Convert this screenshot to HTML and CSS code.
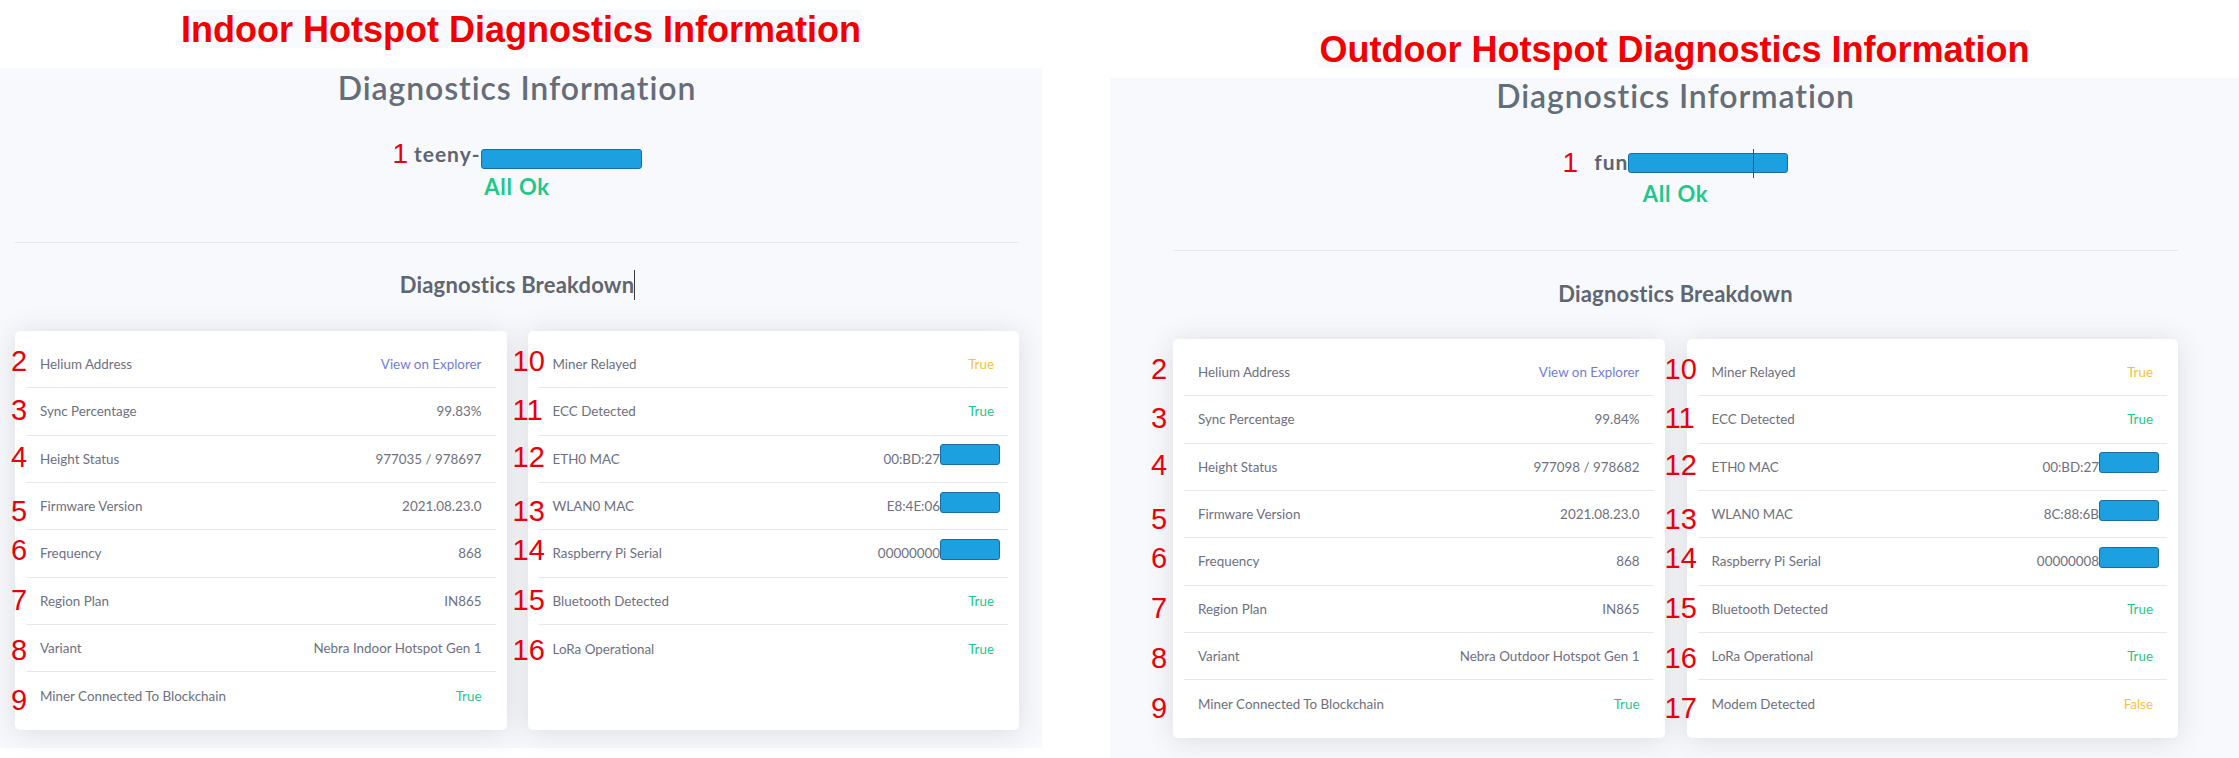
FILE: index.html
```html
<!DOCTYPE html>
<html lang="en">
<head>
<meta charset="utf-8">
<title>Hotspot Diagnostics Information</title>
<link rel="stylesheet" href="styles.css">
</head>
<body>
<div class="page">

  <section class="shot indoor">
    <div class="shot-head"><h1 class="shot-title">Indoor Hotspot Diagnostics Information</h1></div>
    <div class="panel">
      <h2 class="diag-title">Diagnostics Information</h2>
      <div class="host"><span class="anno-host">1</span><span class="host-name">teeny-</span><span class="redact redact-host"></span></div>
      <div class="status">All Ok</div>
      <hr class="divider">
      <h3 class="breakdown"><span class="breakdown-text">Diagnostics Breakdown<span class="caret"></span></span></h3>
      <div class="cards">
        <div class="card card-a">
          <ul class="list">
            <li class="row"><span class="anno">2</span><span class="label">Helium Address</span><span class="value link">View on Explorer</span></li>
            <li class="row"><span class="anno">3</span><span class="label">Sync Percentage</span><span class="value">99.83%</span></li>
            <li class="row"><span class="anno">4</span><span class="label">Height Status</span><span class="value">977035 / 978697</span></li>
            <li class="row"><span class="anno">5</span><span class="label">Firmware Version</span><span class="value">2021.08.23.0</span></li>
            <li class="row"><span class="anno">6</span><span class="label">Frequency</span><span class="value">868</span></li>
            <li class="row"><span class="anno">7</span><span class="label">Region Plan</span><span class="value">IN865</span></li>
            <li class="row"><span class="anno">8</span><span class="label">Variant</span><span class="value">Nebra Indoor Hotspot Gen 1</span></li>
            <li class="row"><span class="anno">9</span><span class="label">Miner Connected To Blockchain</span><span class="value ok">True</span></li>
          </ul>
        </div>
        <div class="card card-b">
          <ul class="list">
            <li class="row"><span class="anno">10</span><span class="label">Miner Relayed</span><span class="value warn">True</span></li>
            <li class="row"><span class="anno">11</span><span class="label">ECC Detected</span><span class="value ok">True</span></li>
            <li class="row"><span class="anno">12</span><span class="label">ETH0 MAC</span><span class="value">00:BD:27<span class="redact redact-row"></span></span></li>
            <li class="row"><span class="anno">13</span><span class="label">WLAN0 MAC</span><span class="value">E8:4E:06<span class="redact redact-row"></span></span></li>
            <li class="row"><span class="anno">14</span><span class="label">Raspberry Pi Serial</span><span class="value">00000000<span class="redact redact-row"></span></span></li>
            <li class="row"><span class="anno">15</span><span class="label">Bluetooth Detected</span><span class="value ok">True</span></li>
            <li class="row"><span class="anno">16</span><span class="label">LoRa Operational</span><span class="value ok">True</span></li>
          </ul>
        </div>
      </div>
    </div>
  </section>

  <section class="shot outdoor">
    <div class="shot-head"><h1 class="shot-title">Outdoor Hotspot Diagnostics Information</h1></div>
    <div class="panel">
      <h2 class="diag-title">Diagnostics Information</h2>
      <div class="host"><span class="anno-host">1</span><span class="host-name">fun</span><span class="redact redact-host"><span class="cursor"></span></span></div>
      <div class="status">All Ok</div>
      <hr class="divider">
      <h3 class="breakdown"><span class="breakdown-text">Diagnostics Breakdown</span></h3>
      <div class="cards">
        <div class="card card-a">
          <ul class="list">
            <li class="row"><span class="anno">2</span><span class="label">Helium Address</span><span class="value link">View on Explorer</span></li>
            <li class="row"><span class="anno">3</span><span class="label">Sync Percentage</span><span class="value">99.84%</span></li>
            <li class="row"><span class="anno">4</span><span class="label">Height Status</span><span class="value">977098 / 978682</span></li>
            <li class="row"><span class="anno">5</span><span class="label">Firmware Version</span><span class="value">2021.08.23.0</span></li>
            <li class="row"><span class="anno">6</span><span class="label">Frequency</span><span class="value">868</span></li>
            <li class="row"><span class="anno">7</span><span class="label">Region Plan</span><span class="value">IN865</span></li>
            <li class="row"><span class="anno">8</span><span class="label">Variant</span><span class="value">Nebra Outdoor Hotspot Gen 1</span></li>
            <li class="row"><span class="anno">9</span><span class="label">Miner Connected To Blockchain</span><span class="value ok">True</span></li>
          </ul>
        </div>
        <div class="card card-b">
          <ul class="list">
            <li class="row"><span class="anno">10</span><span class="label">Miner Relayed</span><span class="value warn">True</span></li>
            <li class="row"><span class="anno">11</span><span class="label">ECC Detected</span><span class="value ok">True</span></li>
            <li class="row"><span class="anno">12</span><span class="label">ETH0 MAC</span><span class="value">00:BD:27<span class="redact redact-row"></span></span></li>
            <li class="row"><span class="anno">13</span><span class="label">WLAN0 MAC</span><span class="value">8C:88:6B<span class="redact redact-row"></span></span></li>
            <li class="row"><span class="anno">14</span><span class="label">Raspberry Pi Serial</span><span class="value">00000008<span class="redact redact-row"></span></span></li>
            <li class="row"><span class="anno">15</span><span class="label">Bluetooth Detected</span><span class="value ok">True</span></li>
            <li class="row"><span class="anno">16</span><span class="label">LoRa Operational</span><span class="value ok">True</span></li>
            <li class="row"><span class="anno">17</span><span class="label">Modem Detected</span><span class="value warn">False</span></li>
          </ul>
        </div>
      </div>
    </div>
  </section>

</div>
</body>
</html>
```

FILE: styles.css
```css
* {
  box-sizing: border-box;
  margin: 0;
  padding: 0;
}

html,
body {
  background: #ffffff;
}

body {
  width: 2239px;
  height: 758px;
  overflow: hidden;
  font-family: Lato, "Open Sans", sans-serif;
}

.page {
  display: grid;
  grid-template-columns: 1042px 1129px;
  column-gap: 68px;
  align-items: start;
}

.shot {
  display: flex;
  flex-direction: column;
}

.shot-head {
  display: flex;
  justify-content: center;
}

.indoor .shot-head {
  height: 68px;
  padding-top: 10px;
}

.outdoor .shot-head {
  height: 78px;
  padding-top: 30px;
}

.shot-title {
  font-family: "Liberation Sans", Arial, sans-serif;
  font-weight: 700;
  font-size: 36px;
  line-height: 37px;
  height: 38px;
  padding: 1px 1px 0;
  color: #f20000;
  background: #f9fafd;
  white-space: nowrap;
}

.panel {
  height: 680px;
  background: #f8f9fc;
  display: flex;
  flex-direction: column;
}

.indoor .panel {
  padding: 2px 23px 0 15px;
}

.outdoor .panel {
  padding: 0 61px 0 63px;
}

.diag-title {
  font-weight: 600;
  font-size: 32px;
  letter-spacing: 0.9px;
  line-height: 36px;
  color: #656d79;
  text-align: center;
}

.host {
  display: flex;
  justify-content: center;
  align-items: flex-start;
  height: 30px;
}

.indoor .host {
  margin-top: 38px;
}

.outdoor .host {
  margin-top: 34px;
}

.anno-host {
  font-family: "Liberation Sans", Arial, sans-serif;
  font-size: 28px;
  line-height: 20px;
  color: #e8000a;
}

.indoor .anno-host {
  margin-right: 6px;
}

.outdoor .anno-host {
  margin-top: 5px;
  margin-right: 16px;
}

.host-name {
  font-weight: 700;
  font-size: 21px;
  letter-spacing: 1px;
  line-height: 20px;
  color: #5e6470;
}

.outdoor .host-name {
  margin-top: 4px;
}

.redact {
  display: inline-block;
  background: #1da0e0;
  border: 1px solid #1a6da3;
  border-radius: 3px;
}

.redact-host {
  position: relative;
  width: 161px;
  height: 20px;
  margin-top: 5px;
}

.outdoor .redact-host {
  width: 160px;
}

.cursor {
  position: absolute;
  left: 124px;
  top: -5px;
  width: 1px;
  height: 29px;
  background: #4a4a4a;
}

.status {
  font-weight: 700;
  font-size: 22px;
  letter-spacing: 0.8px;
  line-height: 26px;
  color: #1cc88a;
  text-align: center;
}

.outdoor .status {
  margin-top: 2.5px;
}

.divider {
  border: 0;
  border-top: 1px solid #e6e8ef;
  height: 1px;
}

.indoor .divider {
  margin-top: 42px;
}

.outdoor .divider {
  margin-top: 43.5px;
}

.breakdown {
  font-weight: 700;
  font-size: 22px;
  letter-spacing: 0.2px;
  line-height: 30px;
  color: #5f6672;
  text-align: center;
}

.breakdown-text {
  position: relative;
}

.indoor .breakdown {
  margin-top: 26.5px;
}

.outdoor .breakdown {
  margin-top: 27.5px;
}

.caret {
  position: absolute;
  right: -1px;
  top: -1px;
  width: 1px;
  height: 30px;
  background: #3a3a3a;
}

.cards {
  display: grid;
  grid-template-columns: 1fr 1fr;
}

.indoor .cards {
  column-gap: 21px;
  margin-top: 31.5px;
}

.outdoor .cards {
  column-gap: 22px;
  margin-top: 30.5px;
}

.card {
  background: #ffffff;
  border-radius: 5px;
  box-shadow: 0 2.4px 28px rgba(58, 59, 69, 0.15);
  padding: 10px 11px;
}

.list {
  list-style: none;
}

.row {
  position: relative;
  display: flex;
  justify-content: space-between;
  align-items: center;
  height: 47.33px;
  padding: 0 14px;
  border-bottom: 1px solid #e6e8ef;
  font-size: 13.4px;
  color: #6e707e;
}

.row:last-child {
  border-bottom: 0;
}

.value {
  display: inline-flex;
  align-items: center;
  white-space: nowrap;
}

.value.link {
  color: #767bd6;
}

.value.ok {
  color: #1cc88a;
}

.value.warn {
  color: #f6c23e;
}

.redact-row {
  position: relative;
  top: -4px;
  width: 60px;
  height: 21px;
  margin-right: -6px;
}

.anno {
  position: absolute;
  top: 1.6px;
  font-family: "Liberation Sans", Arial, sans-serif;
  font-size: 29px;
  line-height: 40px;
  color: #e8000a;
}

.row:nth-child(1) .anno { top: -0.4px; }
.row:nth-child(4) .anno { top: 7.6px; }
.row:nth-child(5) .anno { top: -0.4px; }
.row:nth-child(6) .anno { top: 2px; }
.row:nth-child(7) .anno { top: 4.6px; }
.row:nth-child(8) .anno { top: 7.6px; }

.indoor .card-a .anno {
  left: -15px;
}

.indoor .card-b .anno {
  left: -26px;
}

.outdoor .card-a .anno,
.outdoor .card-b .anno {
  left: -33px;
}
```
